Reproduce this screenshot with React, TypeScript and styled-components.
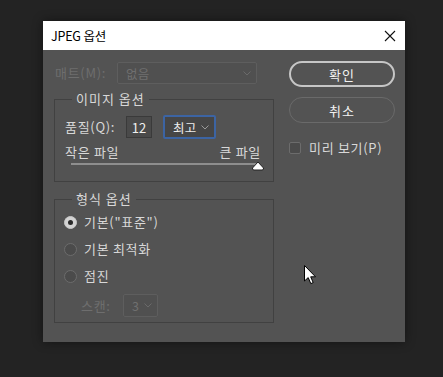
import React from "react";
import styled, { createGlobalStyle } from "styled-components";

const Global = createGlobalStyle`
  html, body { margin: 0; padding: 0; background: #232323; }
  body { width: 443px; height: 377px; overflow: hidden; font-family: "Noto Sans CJK KR", "Noto Sans", sans-serif; }
`;

const Desk = styled.div`
  width: 443px;
  height: 377px;
  padding: 21px 0 0 43px;
  box-sizing: border-box;
`;

const Dialog = styled.div`
  width: 362px;
  height: 321px;
  display: flex;
  flex-direction: column;
  box-shadow: 0 0 10px rgba(0, 0, 0, 0.45);
`;

const TitleBar = styled.div`
  height: 29px;
  background: #ffffff;
  display: flex;
  align-items: center;
  justify-content: space-between;
  padding: 0 9px 0 8px;
  color: #000;
  font-size: 12.5px;
`;

const Title = styled.span`
  font-family: "Noto Sans CJK KR", sans-serif;
  letter-spacing: -0.2px;
`;

const Body = styled.div`
  position: relative;
  flex: 1;
  background: #535353;
  display: flex;
  align-items: flex-start;
  gap: 15px;
  padding: 11px 0 0 11px;
  color: #d8d8d8;
  font-size: 13px;
  letter-spacing: 0.7px;
`;

const LeftCol = styled.div`
  width: 220px;
  display: flex;
  flex-direction: column;
  padding-top: 1px;
`;

const RightCol = styled.div`
  width: 106px;
  display: flex;
  flex-direction: column;
`;

const Row = styled.div<{ $h?: number; $mt?: number }>`
  display: flex;
  align-items: center;
  height: ${(p) => p.$h ?? 22}px;
  margin-top: ${(p) => p.$mt ?? 0}px;
`;

const Label = styled.span<{ $w?: number; $dim?: boolean; $ml?: number }>`
  ${(p) => (p.$w ? `width: ${p.$w}px; flex: 0 0 ${p.$w}px; min-width: 0;` : "")}
  ${(p) => (p.$ml ? `margin-left: ${p.$ml}px;` : "")}
  color: ${(p) => (p.$dim ? "#6e6e6e" : "#d8d8d8")};
  white-space: nowrap;
  line-height: 16px;
`;

const SelectBox = styled.div<{ $w: number; $h: number; $disabled?: boolean; $focus?: boolean }>`
  width: ${(p) => p.$w}px;
  height: ${(p) => p.$h}px;
  flex: 0 0 ${(p) => p.$w}px;
  box-sizing: border-box;
  display: flex;
  align-items: center;
  justify-content: space-between;
  padding: 0 5px 0 8px;
  border-radius: 2px;
  font-size: 12.5px;
  letter-spacing: 0.3px;
  background: ${(p) => (p.$disabled ? "#505050" : "#464646")};
  border: ${(p) =>
    p.$focus ? "2px solid #3c64a3" : p.$disabled ? "1px solid #5e5e5e" : "1px solid #3c3c3c"};
  color: ${(p) => (p.$disabled ? "#6f6f6f" : "#ececec")};
`;

const NumInput = styled.div`
  width: 26px;
  height: 22px;
  flex: 0 0 26px;
  box-sizing: border-box;
  border: 1px solid #3a3a3a;
  background: #4a4a4a;
  display: flex;
  align-items: center;
  justify-content: center;
  color: #f0f0f0;
  letter-spacing: 0;
  margin: 0 11px 0 0;
`;

const Group = styled.fieldset<{ $mt: number }>`
  margin: ${(p) => p.$mt}px 0 0 0;
  padding: 0;
  border: 1px solid #414141;
  width: 220px;
  box-sizing: border-box;
  min-width: 0;
`;

const Legend = styled.legend`
  margin-left: 17px;
  padding: 0 4px;
  line-height: 16px;
  height: 16px;
  color: #d8d8d8;
  font-size: 13px;
  letter-spacing: 1px;
`;

const GroupInner = styled.div<{ $pad: string }>`
  padding: ${(p) => p.$pad};
  display: flex;
  flex-direction: column;
`;

const SizeLabels = styled.div`
  display: flex;
  justify-content: space-between;
  height: 16px;
  margin-top: 5px;
  line-height: 16px;
`;

const SliderWrap = styled.div`
  position: relative;
  height: 10px;
  margin: 2px 3px 0 6px;
`;

const Track = styled.div`
  position: absolute;
  left: 0;
  right: 0;
  top: 1px;
  height: 2px;
  background: #8e8e8e;
`;

const Thumb = styled.svg`
  position: absolute;
  right: -7px;
  top: -1px;
`;

const RadioRow = styled.div<{ $mt?: number }>`
  display: flex;
  align-items: center;
  height: 20px;
  gap: 7px;
  margin-top: ${(p) => p.$mt ?? 0}px;
`;

const Radio = styled.span<{ $on?: boolean }>`
  width: 13px;
  height: 13px;
  box-sizing: border-box;
  border-radius: 50%;
  border: 1px solid ${(p) => (p.$on ? "#c8c8c8" : "#6c6c6c")};
  background: ${(p) => (p.$on ? "#d4d4d4" : "#4b4b4b")};
  display: flex;
  align-items: center;
  justify-content: center;
  &::after {
    content: "";
    width: 5px;
    height: 5px;
    border-radius: 50%;
    background: ${(p) => (p.$on ? "#2a2a2a" : "transparent")};
  }
`;

const PillButton = styled.div<{ $primary?: boolean; $mt?: number }>`
  height: 26px;
  box-sizing: border-box;
  border-radius: 13px;
  border: ${(p) => (p.$primary ? "2px solid #c6c6c6" : "1.5px solid #6a6a6a")};
  display: flex;
  align-items: center;
  justify-content: center;
  color: #f2f2f2;
  font-size: 13px;
  margin-top: ${(p) => p.$mt ?? 0}px;
  letter-spacing: 1px;
`;

const CheckRow = styled.div`
  display: flex;
  align-items: center;
  gap: 8px;
  margin-top: 18px;
  height: 14px;
`;

const CheckBox = styled.span`
  width: 12px;
  height: 12px;
  box-sizing: border-box;
  border: 1px solid #6c6c6c;
  background: #4b4b4b;
  border-radius: 2px;
`;

const Cursor = styled.svg`
  position: absolute;
  left: 261px;
  top: 215px;
`;

const Chevron = ({ color }: { color: string }) => (
  <svg width="8" height="5" viewBox="0 0 8 5">
    <path d="M0.5 0.5 L4 4 L7.5 0.5" fill="none" stroke={color} strokeWidth="1" />
  </svg>
);

export default function App() {
  return (
    <>
      <Global />
      <Desk>
        <Dialog>
          <TitleBar>
            <Title>JPEG 옵션</Title>
            <svg width="12" height="12" viewBox="0 0 12 12">
              <path d="M1 1 L11 11 M11 1 L1 11" stroke="#111" strokeWidth="1.1" />
            </svg>
          </TitleBar>
          <Body>
            <LeftCol>
              <Row $h={22}>
                <Label $w={62} $dim $ml={1}>매트(M):</Label>
                <SelectBox $w={140} $h={22} $disabled>
                  <span>없음</span>
                  <Chevron color="#6a6a6a" />
                </SelectBox>
              </Row>
              <Group $mt={7}>
                <Legend>이미지 옵션</Legend>
                <GroupInner $pad="8px 12px 9px 10px">
                  <Row $h={24}>
                    <Label $w={61}>품질(Q):</Label>
                    <NumInput>12</NumInput>
                    <SelectBox $w={53} $h={24} $focus>
                      <span>최고</span>
                      <Chevron color="#9a9a9a" />
                    </SelectBox>
                  </Row>
                  <SizeLabels>
                    <span>작은 파일</span>
                    <span>큰 파일</span>
                  </SizeLabels>
                  <SliderWrap>
                    <Track />
                    <Thumb width="14" height="10" viewBox="0 0 14 10">
                      <path d="M7 1 L12.5 7 Q13 9 11 9 L3 9 Q1 9 1.5 7 Z" fill="#ffffff" stroke="#222" strokeWidth="1" />
                    </Thumb>
                  </SliderWrap>
                </GroupInner>
              </Group>
              <Group $mt={9}>
                <Legend>형식 옵션</Legend>
                <GroupInner $pad="5px 0 5px 9px">
                  <RadioRow>
                    <Radio $on />
                    <Label>기본("표준")</Label>
                  </RadioRow>
                  <RadioRow $mt={7}>
                    <Radio />
                    <Label>기본 최적화</Label>
                  </RadioRow>
                  <RadioRow $mt={7}>
                    <Radio />
                    <Label>점진</Label>
                  </RadioRow>
                  <Row $h={23} $mt={8}>
                    <Label $w={42} $dim $ml={17}>스캔:</Label>
                    <SelectBox $w={35} $h={23} $disabled>
                      <span>3</span>
                      <Chevron color="#6a6a6a" />
                    </SelectBox>
                  </Row>
                </GroupInner>
              </Group>
            </LeftCol>
            <RightCol>
              <PillButton $primary>확인</PillButton>
              <PillButton $mt={10}>취소</PillButton>
              <CheckRow>
                <CheckBox />
                <Label>미리 보기(P)</Label>
              </CheckRow>
            </RightCol>
            <Cursor width="13" height="20" viewBox="0 0 13 20">
              <path d="M0.5 0.5 L0.5 16 L4.2 12.6 L6.8 18.6 L9.2 17.6 L6.7 11.8 L11.5 11.8 Z" fill="#ffffff" stroke="#000" strokeWidth="1" />
            </Cursor>
          </Body>
        </Dialog>
      </Desk>
    </>
  );
}
